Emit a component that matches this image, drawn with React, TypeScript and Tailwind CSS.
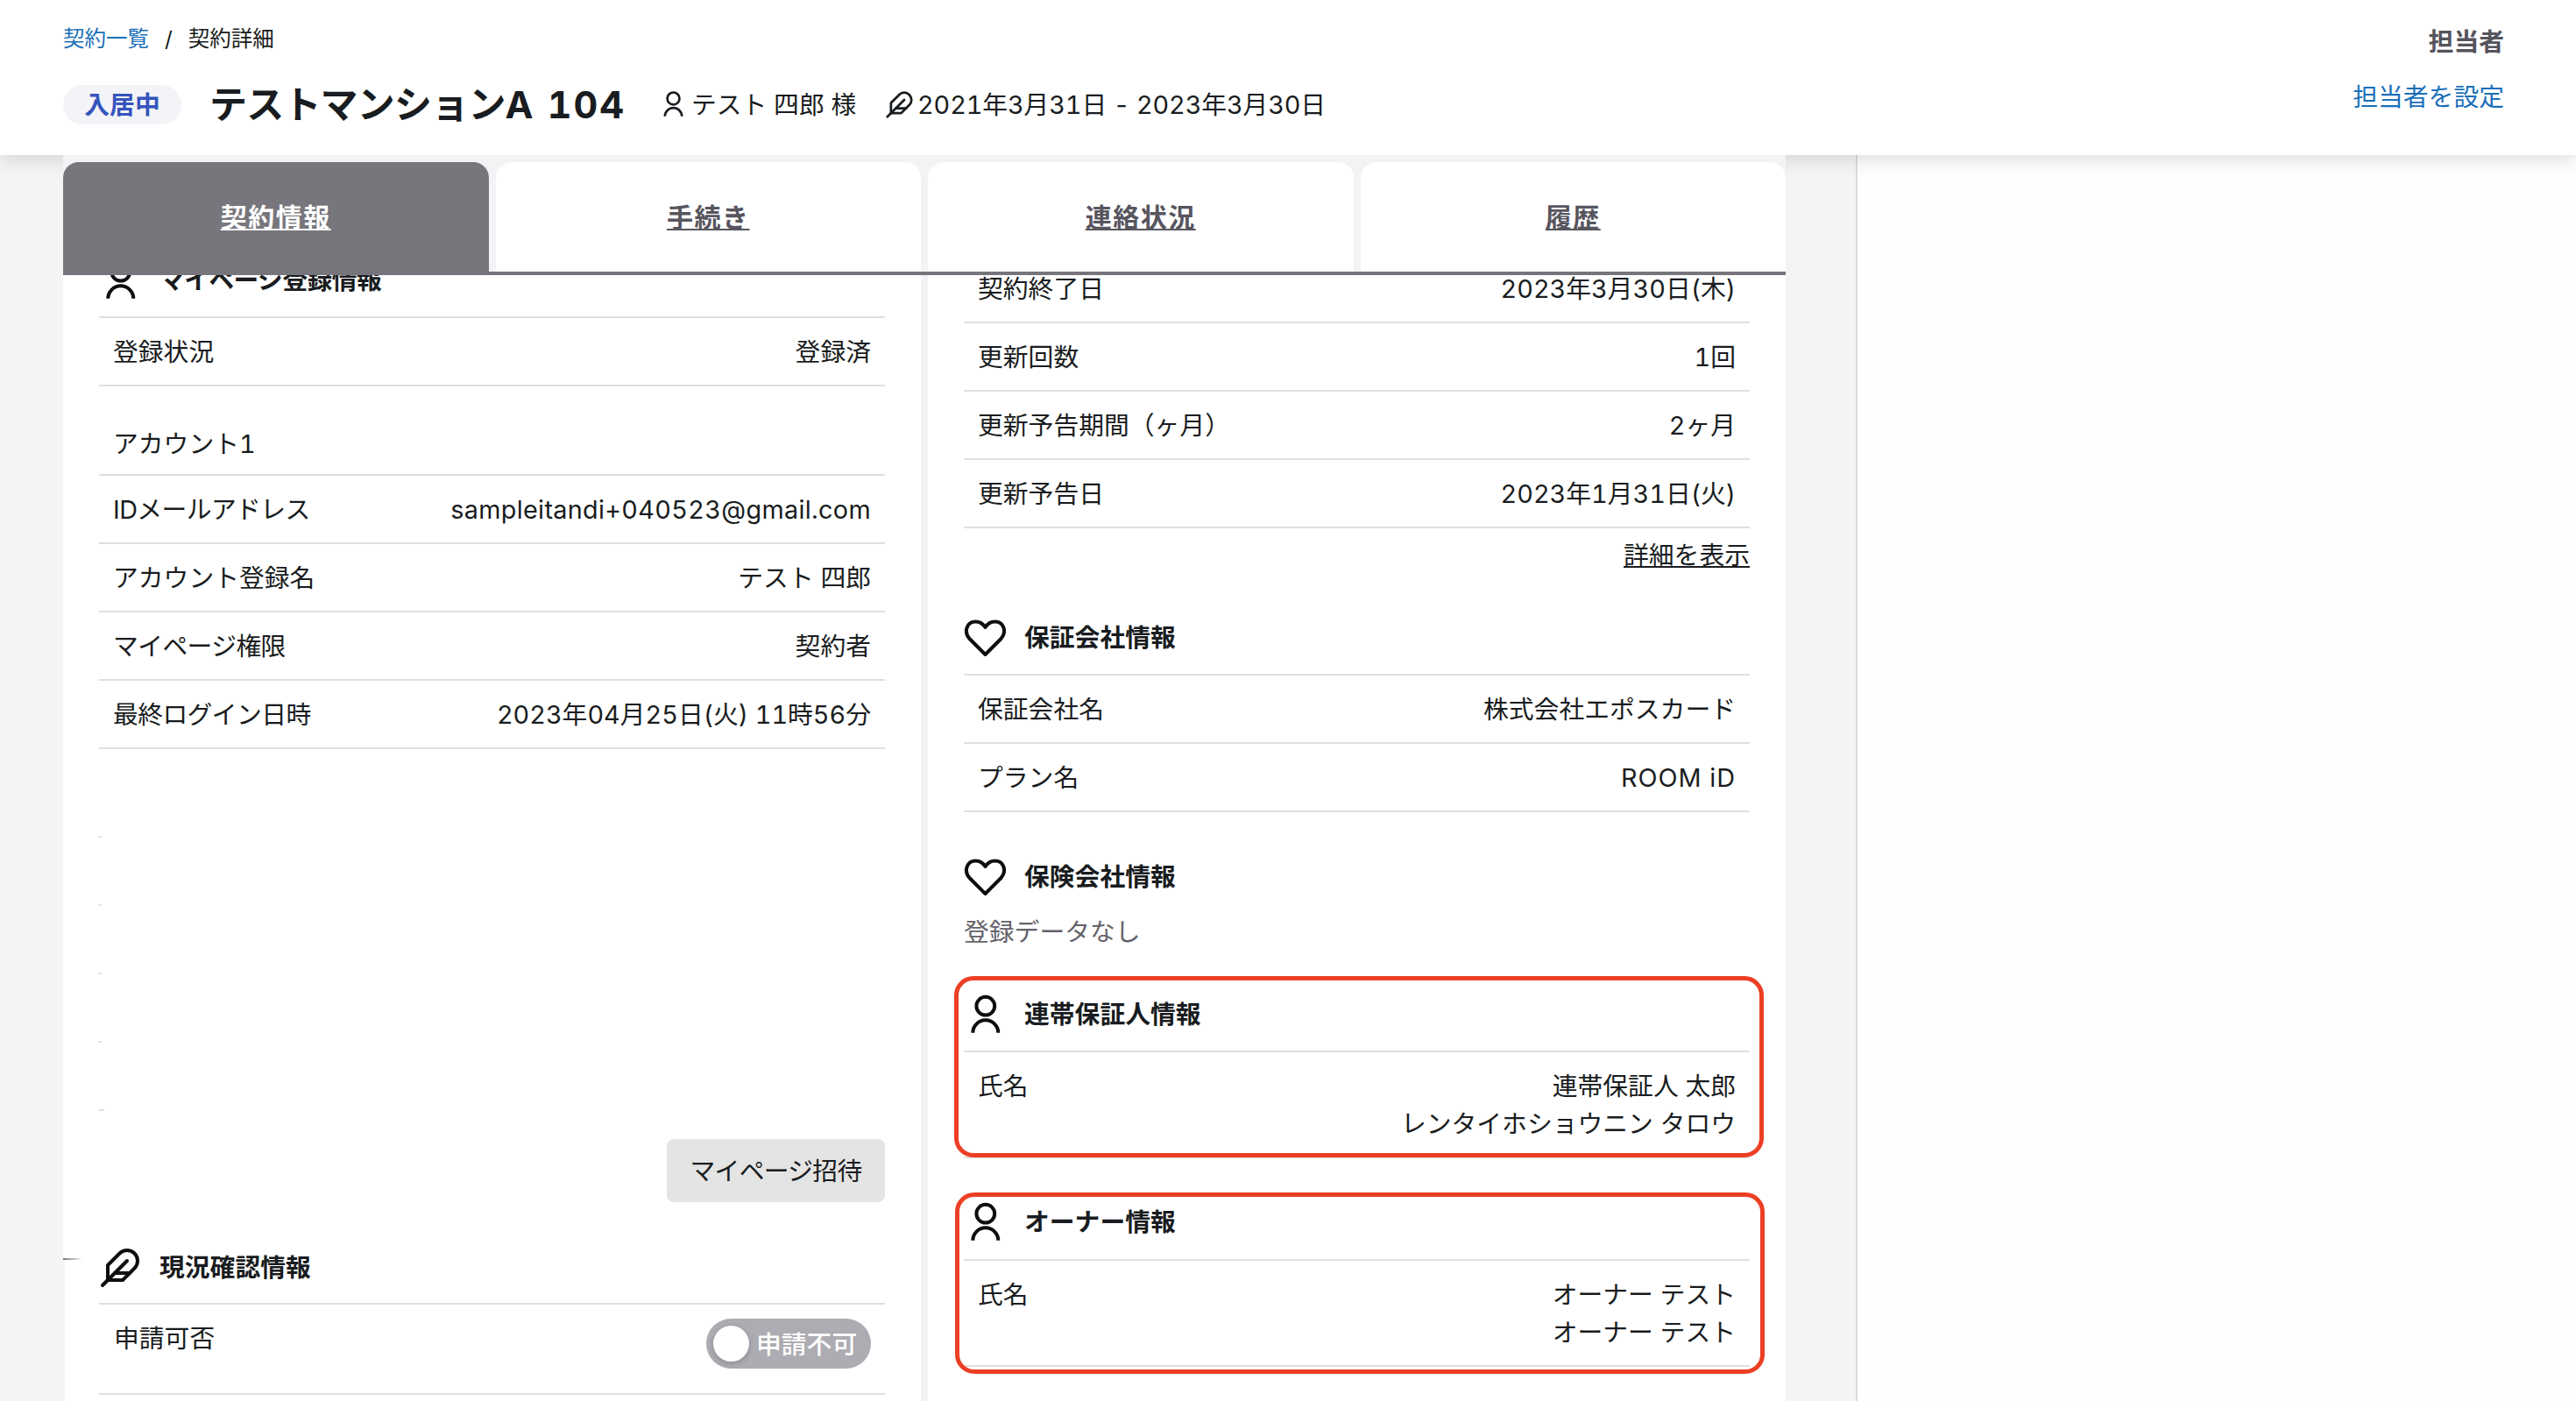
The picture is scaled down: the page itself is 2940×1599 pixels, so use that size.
import React from 'react';

type IconName = 'user' | 'feather' | 'heart';

interface IconProps {
  name: IconName;
  className?: string;
}

const Icon: React.FC<IconProps> = ({ name, className }) => (
  <svg
    viewBox="0 0 48 48"
    className={className}
    fill="none"
    stroke="currentColor"
    strokeWidth="4"
    strokeLinecap={name === 'user' ? 'butt' : 'round'}
    strokeLinejoin="round"
  >
    {name === 'user' && (
      <>
        <circle cx="24.8" cy="14.2" r="10.4" />
        <path d="M10.3 44.8a14.500 14.500 0 0 1 29 0" />
      </>
    )}
    {name === 'feather' && (
      <>
        <path d="M40.500 24.500a12 12 0 0 0-17-17L10 21v17h17z" />
        <path d="M32 16L4 44" />
        <path d="M35 30H18" />
      </>
    )}
    {name === 'heart' && (
      <path d="M24.500 43L6.500 25C-.5 17 3.500 5.500 13.500 5.500c5 0 8.500 2.500 11 6.500 2.500-4 6-6.500 11-6.500 10 0 14 11.500 7 19.500z" />
    )}
  </svg>
);

interface SectionTitleProps {
  icon: IconName;
  title: string;
  className?: string;
}

const SectionTitle: React.FC<SectionTitleProps> = ({ icon, title, className = '' }) => (
  <div className="flex h-12 items-center">
    <Icon name={icon} className="h-12 w-12 text-[#0d0e10]" />
    <h2 className={`mb-0.5 ml-[21px] leading-[43px] font-bold ${className}`}>{title}</h2>
  </div>
);

interface RowProps {
  label: string;
  values: string[];
  tight?: boolean;
  valueClassName?: string;
}

const Row: React.FC<RowProps> = ({ label, values, tight, valueClassName = '' }) => (
  <div className="flex justify-between border-b-2 border-[#dfdfdf] px-4 pt-[17px] pb-4">
    <span className={tight ? 'tracking-[-0.600px]' : ''}>{label}</span>
    <div className={`text-right ${valueClassName}`}>
      {values.map((value, i) => (
        <div key={i}>{value}</div>
      ))}
    </div>
  </div>
);

const tabs = ['契約情報', '手続き', '連絡状況', '履歴'];

const accountRows: RowProps[] = [
  {
    label: 'IDメールアドレス',
    values: ['sampleitandi+040523@gmail.com'],
    tight: true,
    valueClassName: 'tracking-[0.320px]',
  },
  { label: 'アカウント登録名', values: ['テスト 四郎'] },
  { label: 'マイページ権限', values: ['契約者'], tight: true },
  { label: '最終ログイン日時', values: ['2023年04月25日(火) 11時56分'], tight: true },
];

const contractRows: RowProps[] = [
  { label: '契約終了日', values: ['2023年3月30日(木)'] },
  { label: '更新回数', values: ['1回'] },
  { label: '更新予告期間（ヶ月）', values: ['2ヶ月'] },
  { label: '更新予告日', values: ['2023年1月31日(火)'] },
];

const Header = () => (
  <header className="relative z-10 flex h-[177px] justify-between bg-white pr-[82px] pl-[72px] shadow-[0_4px_22px_rgba(0,0,0,0.14)]">
    <div>
      <nav className="mt-6 flex h-10 items-center text-[24.500px]">
        <a className="text-[#1b6fb8]">契約一覧</a>
        <span className="mx-[18px]">/</span>
        <span>契約詳細</span>
      </nav>
      <div className="mt-[31px] flex h-12 items-center">
        <span className="flex h-[45px] w-[135px] items-center justify-center rounded-full bg-[#f3f4f7] font-bold text-[#3654bd]">
          入居中
        </span>
        <h1 className="ml-8 w-[480px] text-[43px] font-bold tracking-[-0.800px] whitespace-nowrap">
          テストマンションA <span className="ml-1.5 tracking-[2px]">104</span>
        </h1>
        <Icon name="user" className="ml-[33px] h-8 w-8" />
        <span className="ml-[5px] w-[193px] whitespace-nowrap">テスト 四郎 様</span>
        <Icon name="feather" className="ml-7 h-[33px] w-[33px]" />
        <span className="ml-1 tracking-[-0.100px] whitespace-nowrap">2021年3月31日 - 2023年3月30日</span>
      </div>
    </div>
    <div className="pt-[26px] text-right">
      <div className="font-bold text-[#55535c]">担当者</div>
      <a className="mt-5 block text-[#1b6fb8]">担当者を設定</a>
    </div>
  </header>
);

const LeftColumn = () => (
  <section className="relative w-[979px] bg-white px-[41px]">
    <div className="-mt-[18px]">
      <SectionTitle icon="user" title="マイページ登録情報" className="tracking-[-0.600px]" />
    </div>
    <div className="mt-[17px] border-t-2 border-[#dfdfdf]">
      <Row label="登録状況" values={['登録済']} />
    </div>
    <div className="mt-[27px] border-b-2 border-[#dfdfdf] px-4 pt-[17px] pb-[13px]">アカウント1</div>
    {accountRows.map(row => (
      <Row key={row.label} {...row} />
    ))}
    {/* Empty account slots */}
    <div className="mt-[99px] flex flex-col gap-[76px]">
      {[1, 2, 3, 4, 5].map(n => (
        <div key={n} className={`h-0.5 bg-[#dedede] ${n === 5 ? 'w-1.5' : 'w-[3px]'}`} />
      ))}
    </div>
    <div className="mt-8 flex justify-end">
      <button className="h-[72px] w-[249px] rounded-lg bg-[#e4e4e4] tracking-[-0.700px]">マイページ招待</button>
    </div>
    <div className="mt-[51px]">
      <SectionTitle icon="feather" title="現況確認情報" />
    </div>
    <div className="mt-4 flex h-[105px] justify-between border-y-2 border-[#dfdfdf] px-4 pt-4">
      <span className="mt-px ml-px">申請可否</span>
      <div className="flex h-[57px] w-[188px] items-center rounded-full bg-[#adacb2] pl-2 text-white">
        <span className="h-[41px] w-[41px] rounded-full bg-white shadow-[0_2px_6px_rgba(0,0,0,0.2)]" />
        <span className="mt-0.5 ml-2 font-medium">申請不可</span>
      </div>
    </div>
    <div className="absolute top-[1122px] left-0 h-0.5 w-[22px] bg-linear-to-r from-[#77767c] to-white" />
    <div className="absolute top-[1124px] bottom-0 left-0 w-0.5 bg-[#f4f4f4]" />
  </section>
);

const RightColumn = () => (
  <section className="w-[979px] bg-white px-[41px]">
    <div className="-mt-[23px]">
      {contractRows.map(row => (
        <Row key={row.label} {...row} />
      ))}
    </div>
    <div className="mt-[9px] text-right">
      <a className="underline decoration-2 underline-offset-2 [text-decoration-skip-ink:none]">詳細を表示</a>
    </div>
    <div className="mt-[49px]">
      <SectionTitle icon="heart" title="保証会社情報" />
    </div>
    <div className="mt-[17px] border-t-2 border-[#dfdfdf]">
      <Row label="保証会社名" values={['株式会社エポスカード']} />
      <Row label="プラン名" values={['ROOM iD']} valueClassName="tracking-[1px]" />
    </div>
    <div className="mt-[50px]">
      <SectionTitle icon="heart" title="保険会社情報" />
    </div>
    <p className="mt-[17px] text-[#64626a]">登録データなし</p>
    <div className="relative mt-[49px]">
      <SectionTitle icon="user" title="連帯保証人情報" />
      <div className="mt-[17px] border-t-2 border-[#dfdfdf]">
        <Row label="氏名" values={['連帯保証人 太郎', 'レンタイホショウニン タロウ']} />
      </div>
      <div className="absolute -top-5 -left-[11px] h-[207px] w-[924px] rounded-[22px] border-[5px] border-[#ec3f24]" />
    </div>
    <div className="relative mt-[49px]">
      <SectionTitle icon="user" title="オーナー情報" />
      <div className="mt-[18px] border-t-2 border-[#dfdfdf]">
        <Row label="氏名" values={['オーナー テスト', 'オーナー テスト']} />
      </div>
      <div className="absolute -top-2.5 -left-2.5 h-[207px] w-[924px] rounded-[22px] border-[5px] border-[#ec3f24]" />
    </div>
  </section>
);

const App: React.FC = () => {
  return (
    <div className="h-[1599px] w-[2940px] overflow-hidden bg-[#f4f4f4] font-['Inter','Noto_Sans_CJK_JP',sans-serif] text-[28.800px] leading-[43px] text-[#191c20] tabular-nums">
      <Header />
      <div className="flex h-[1422px]">
        <main className="relative z-20 ml-[72px] flex w-[1966px] flex-col bg-[#f3f3f6] pt-2">
          <div className="flex h-[129px] shrink-0 gap-2 border-b-4 border-[#76757b]">
            {tabs.map((tab, i) => (
              <a
                key={tab}
                className={`flex flex-1 items-center justify-center rounded-t-[18px] pt-0.5 text-[30px] font-bold tracking-[1.500px] underline decoration-2 underline-offset-2 [text-decoration-skip-ink:none] ${
                  i === 0 ? 'bg-[#77767c] text-white' : 'bg-white text-[#57555e]'
                }`}
              >
                {tab}
              </a>
            ))}
          </div>
          <div className="flex min-h-0 flex-1 gap-2 overflow-hidden">
            <LeftColumn />
            <RightColumn />
          </div>
        </main>
        <aside className="ml-[80px] flex-1 border-l-2 border-[#dcdcdc] bg-[#fefefe]" />
      </div>
    </div>
  );
};

export default App;
